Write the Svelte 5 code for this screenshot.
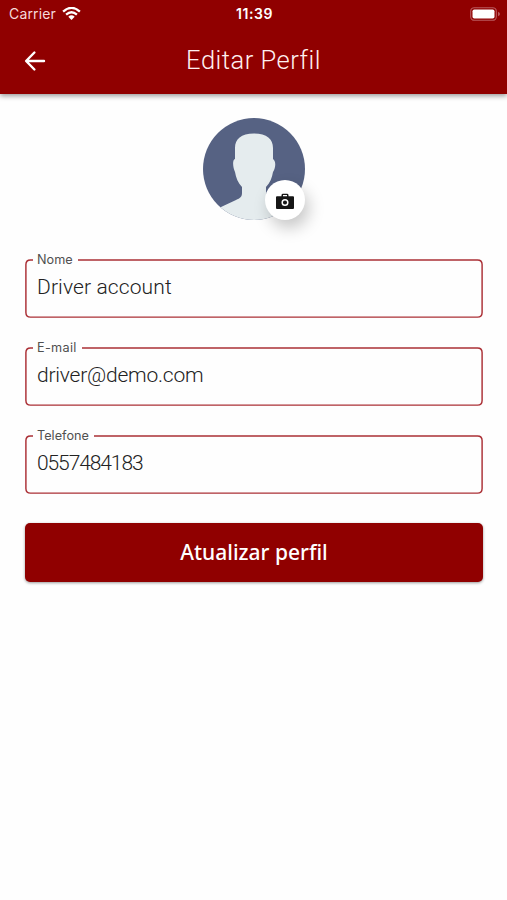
<script>
  const fields = [
    { label: 'Nome', value: 'Driver account', gapEnd: 53, id: 'name' },
    { label: 'E-mail', value: 'driver@demo.com', gapEnd: 57, id: 'email' },
    { label: 'Telefone', value: '0557484183', gapEnd: 69, id: 'phone' }
  ];
</script>

<main>
  <header>
    <div class="status">
      <div class="carrier">
        <span>Carrier</span>
        <svg width="19" height="14" viewBox="0 0 19 14" fill="none" stroke="#fff" stroke-width="2.3">
          <path d="M1.1 4.7Q9.5-3 17.9 4.7" />
          <path d="M4.1 7.7Q9.5 2.9 14.9 7.7" />
          <path d="M6.3 9.7Q9.5 7 12.7 9.7L9.5 13.1Z" fill="#fff" stroke="none" />
        </svg>
      </div>
      <time>11:39</time>
      <svg class="battery" width="31" height="14" viewBox="0 0 31 14">
        <rect x=".7" y=".7" width="25.6" height="12.6" rx="3.6" fill="none" stroke="#b95a5e" stroke-width="1.1" />
        <rect x="2.5" y="2.4" width="22" height="9.2" rx="1.8" fill="#fff" />
        <path d="M28 4.7Q30 5.5 30 7T28 9.3Z" fill="#b95a5e" />
      </svg>
    </div>
    <div class="bar">
      <svg class="back" width="22" height="22" viewBox="0 0 22 22" fill="none" stroke="#fff" stroke-width="2.4" stroke-linecap="round" stroke-linejoin="round">
        <path d="M20 11H2.6M10.4 2.5L2.1 11L10.4 19.5" />
      </svg>
      <h1>Editar Perfil</h1>
    </div>
  </header>

  <section class="photo">
    <svg width="102" height="102" viewBox="0 0 102 102">
      <defs><clipPath id="disc"><circle cx="51" cy="51" r="51" /></clipPath></defs>
      <g clip-path="url(#disc)">
        <rect width="102" height="102" fill="#566283" />
        <path d="M51 15.5C38 15.5 32 21 32 30V41C29 42 30 50 32 54C33 60 35 65 39 69V75C39 79 37 80 33 82L18 89L0 102H102L82 88C70 82 64 80 63 76V69C67 65 69 60 70 54C73 49 73 43 70 41V30C70 21 64 15.5 51 15.5Z" fill="#e5ecee" />
      </g>
    </svg>
    <button class="camera" aria-label="Foto">
      <svg width="18" height="17" viewBox="0 0 18 17">
        <path d="M5.5 3.2V2.2Q5.5.8 7 .8H11Q12.5.8 12.5 2.2V3.2H17Q18 3.2 18 4.2V15Q18 16 17 16H1Q0 16 0 15V4.2Q0 3.2 1 3.2ZM7 3.2H11V2H7Z" fill="#161616" fill-rule="evenodd" />
        <circle cx="9" cy="9.5" r="2.8" fill="#161616" stroke="#fff" stroke-width="1.5" />
      </svg>
    </button>
  </section>

  <form>
    {#each fields as field}
      <div class="field {field.id}">
        <svg class="outline" width="458" height="59" viewBox="0 0 458 59" fill="none">
          <path d="M8 .9H5.5Q.9.9.9 5.5V53.5Q.9 58.1 5.5 58.1H452.5Q457.1 58.1 457.1 53.5V5.5Q457.1.9 452.5.9H{field.gapEnd}" stroke="#ab3036" stroke-width="1.45" />
        </svg>
        <span class="label">{field.label}</span>
        <div class="value">{field.value}</div>
      </div>
    {/each}
    <button class="submit" type="button">Atualizar perfil</button>
  </form>
</main>

<style>
  :global(body) { background: #fff; }
  main { height: 900px; overflow: hidden; background: #fefefe; font-family: Roboto, sans-serif; }
  header { position: relative; height: 94px; background: #900000; color: #fff; box-shadow: 0 2px 5px rgba(0, 0, 0, .4); }
  .status { height: 27px; display: grid; grid-template-columns: 1fr auto 1fr; align-items: center; padding: 0 6px 0 9px; font-family: Inter, sans-serif; font-size: 14px; }
  .carrier { display: flex; align-items: center; gap: 6px; color: #f5dada; letter-spacing: .15px; }
  time { font-weight: 600; font-size: 14px; letter-spacing: .6px; margin-right: 1px; }
  .battery { justify-self: end; }
  .bar { height: 67px; display: grid; grid-template-columns: 50px 1fr 50px; align-items: center; }
  .back { margin-left: 24px; }
  h1 { margin: 0; text-align: center; font: 300 25.5px/30px Roboto, sans-serif; letter-spacing: .5px; color: #fff0f0; padding-bottom: 2px; }
  .photo { position: relative; width: 102px; height: 102px; margin: 24px auto 39px 203px; }
  .photo > svg { display: block; }
  .camera { position: absolute; left: 62px; top: 62px; width: 40px; height: 40px; padding: 0; border: 0; border-radius: 50%; background: #fff; display: grid; place-items: center; box-shadow: 4px 8px 16px rgba(0, 0, 0, .22); }
  .camera svg { margin-top: 2px; }
  form { display: flex; flex-direction: column; gap: 29px; padding: 0 24px 0 25px; }
  .field { position: relative; height: 59px; }
  .outline { position: absolute; inset: 0; }
  .label { position: absolute; left: 12px; top: -7px; font: 12.7px/16px Inter, sans-serif; color: #505050; }
  .email .label { letter-spacing: .3px; }
  .value { padding: 14px 0 0 12px; font: 300 21px/28px Roboto, sans-serif; letter-spacing: .12px; color: #222; }
  .email .value { letter-spacing: -.22px; }
  .phone .value { letter-spacing: -1.1px; }
  .submit { height: 59px; margin: 0; padding: 0 0 2px; border: 0; border-radius: 5px; background: #900000; color: #fff; font: 500 21px/28px "Noto Sans", sans-serif; box-shadow: 0 1px 3px rgba(0, 0, 0, .4); }
</style>
